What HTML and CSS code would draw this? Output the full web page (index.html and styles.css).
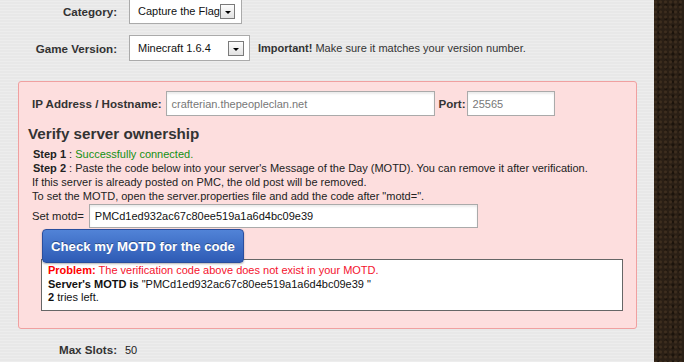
FILE: index.html
```html
<!DOCTYPE html>
<html>
<head>
<meta charset="utf-8">
<link rel="stylesheet" href="styles.css">
</head>
<body>
<div class="page">
  <div class="main">
    <div class="row row-cat">
      <div class="label">Category:</div>
      <div class="select sel-cat"><span class="sel-text">Capture the Flag</span><span class="arrow"></span></div>
    </div>
    <div class="row row-ver">
      <div class="label">Game Version:</div>
      <div class="select sel-ver"><span class="sel-text">Minecraft 1.6.4</span><span class="arrow arrow-ver"></span></div>
      <div class="note"><b>Important!</b> Make sure it matches your version number.</div>
    </div>
    <div class="verify">
      <div class="ip-row">
        <span class="ip-label">IP Address / Hostname:</span>
        <div class="input input-ip">crafterian.thepeopleclan.net</div>
        <span class="ip-label port-label">Port:</span>
        <div class="input input-port">25565</div>
      </div>
      <h2 class="heading">Verify server ownership</h2>
      <div class="steps">
        <div class="step"><b>Step 1</b> : <span class="ok">Successfully connected.</span></div>
        <div class="step"><b>Step 2</b> : Paste the code below into your server's Message of the Day (MOTD). You can remove it after verification.</div>
        <div class="info">If this server is already posted on PMC, the old post will be removed.</div>
        <div class="info">To set the MOTD, open the server.properties file and add the code after "motd=".</div>
      </div>
      <div class="motd-row">
        <span class="motd-label">Set motd=</span>
        <div class="input input-motd">PMCd1ed932ac67c80ee519a1a6d4bc09e39</div>
      </div>
      <div class="check-area">
        <button class="check-btn">Check my MOTD for the code</button>
        <div class="result">
          <div class="problem"><b>Problem:</b> The verification code above does not exist in your MOTD.</div>
          <div><b>Server's MOTD is</b> "PMCd1ed932ac67c80ee519a1a6d4bc09e39 "</div>
          <div><b>2</b> tries left.</div>
        </div>
      </div>
    </div>
    <div class="row row-slots">
      <div class="label">Max Slots:</div>
      <div class="slots-val">50</div>
    </div>
  </div>
  <div class="side"></div>
</div>
</body>
</html>
```
FILE: styles.css
```css
html, body {
  margin: 0;
  padding: 0;
  height: 100%;
}
body {
  font-family: "Liberation Sans", Arial, sans-serif;
  font-size: 11px;
  color: #333;
  background: #e8e8e8;
  overflow: hidden;
}
.page {
  display: flex;
  height: 362px;
}
.main {
  width: 654px;
  background-color: #e8e8e8;
  background-image: repeating-linear-gradient(0deg, rgba(255,255,255,0.22) 0 1px, rgba(0,0,0,0) 1px 3px);
}
.side {
  flex: 1;
  background-color: #2a1f15;
  background-image:
    radial-gradient(circle at 30% 40%, #3d2d1e 0 1px, transparent 2px),
    radial-gradient(circle at 70% 70%, #1b130b 0 1px, transparent 2px);
  background-size: 5px 5px, 7px 7px;
}
.row {
  display: flex;
  align-items: center;
}
.label {
  width: 117px;
  text-align: right;
  font-weight: bold;
  font-size: 11.6px;
  color: #333;
  margin-right: 12px;
}
.row-cat {
  margin-top: -2px;
  height: 26px;
}
.row-ver {
  margin-top: 11px;
  height: 26px;
}
.select {
  box-sizing: border-box;
  height: 26px;
  background: #fff;
  border: 1px solid #aaa;
  display: flex;
  align-items: center;
  font-size: 11px;
  color: #111;
}
.sel-cat { width: 113px; padding-left: 8px; }
.sel-ver { width: 121px; padding-left: 8px; }
.sel-text { flex: 1; white-space: nowrap; }
.arrow {
  box-sizing: border-box;
  width: 16px;
  height: 15px;
  border: 1px solid #7a7a7a;
  background: linear-gradient(#fdfdfd, #e2e2e2);
  position: relative;
  margin-right: 6px;
}
.arrow-ver { margin-right: 5px; }
.arrow::after {
  content: "";
  position: absolute;
  left: 4px;
  top: 6px;
  border-left: 3px solid transparent;
  border-right: 3px solid transparent;
  border-top: 3px solid #000;
}
.note {
  margin-left: 8px;
  font-size: 11px;
  color: #333;
}
.verify {
  box-sizing: border-box;
  margin: 20px 0 0 18px;
  width: 619px;
  height: 248px;
  background: #fddede;
  border: 1px solid #f0a0a0;
  border-radius: 3px;
  padding: 9px 13px 0 13px;
}
.ip-row {
  display: flex;
  align-items: center;
  height: 25px;
}
.ip-label {
  font-weight: bold;
  font-size: 11.6px;
  color: #333;
  margin-right: 4px;
}
.port-label { margin-left: 4px; margin-right: 1px; }
.input {
  box-sizing: border-box;
  height: 25px;
  background: #fff;
  border: 1px solid #aaa;
  box-shadow: inset 0 2px 2px rgba(0,0,0,0.08);
  display: flex;
  align-items: center;
  padding-left: 5px;
  font-size: 11px;
  color: #777;
  white-space: nowrap;
}
.input-ip { width: 269px; }
.input-port { width: 88px; }
.heading {
  margin: 9px 0 0 -4px;
  font-size: 15.2px;
  font-weight: bold;
  color: #333;
  line-height: 18px;
}
.steps {
  margin-top: 4px;
  font-size: 11px;
  line-height: 14px;
  color: #222;
  white-space: nowrap;
}
.step { padding-left: 1px; }
.ok { color: #129012; }
.motd-row {
  display: flex;
  align-items: center;
  margin-top: 1px;
  height: 24px;
}
.motd-label {
  font-size: 11.3px;
  color: #222;
  margin-right: 5px;
}
.input-motd {
  width: 389px;
  height: 24px;
  color: #111;
}
.check-area {
  margin-top: 1px;
}
.check-btn {
  position: relative;
  z-index: 1;
  display: block;
  box-sizing: border-box;
  width: 202px;
  height: 34px;
  margin: 0 0 -4px 10px;
  border: 1px solid #2a4e9e;
  border-radius: 4px;
  background: linear-gradient(#5183d7, #2e5bb5);
  color: #fff;
  font-family: "Liberation Sans", Arial, sans-serif;
  font-weight: bold;
  font-size: 13.2px;
  text-shadow: 0 -1px 0 rgba(0,0,0,0.35);
  box-shadow: 0 1px 2px rgba(0,0,0,0.3);
  padding: 0;
}
.result {
  box-sizing: border-box;
  margin-left: 9px;
  width: 582px;
  height: 52px;
  background: #fff;
  border: 1px solid #666;
  padding: 4px 6px 0 6px;
  font-size: 11px;
  line-height: 13.5px;
  color: #111;
}
.problem { color: #f4122e; }
.problem b { color: #f00; }
.row-slots {
  margin-top: 14px;
  line-height: 14px;
}
.slots-val {
  font-size: 11px;
  color: #222;
  margin-left: -4px;
}
```
